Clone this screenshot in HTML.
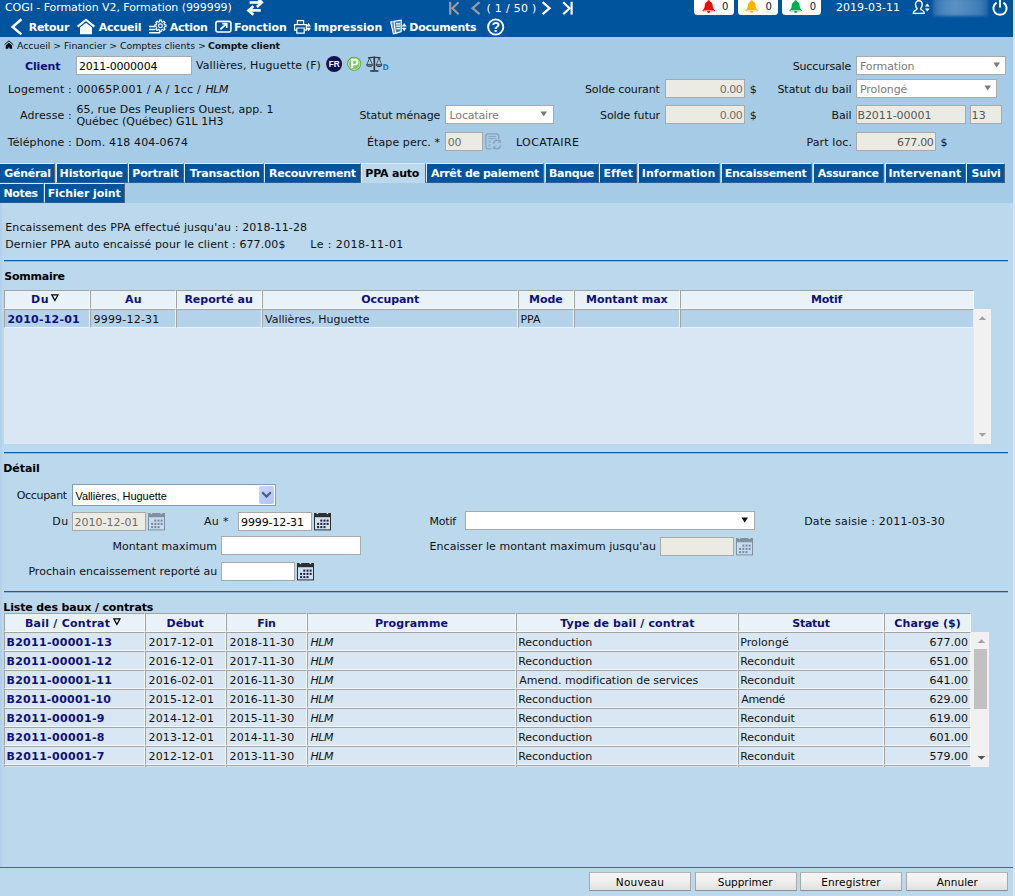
<!DOCTYPE html><html lang="fr"><head><meta charset="utf-8"><title>COGI - Compte client</title><style>
html,body{margin:0;padding:0}body{width:1015px;height:896px;position:relative;overflow:hidden;background:#bcd8ed;font-family:'DejaVu Sans','Liberation Sans',sans-serif;font-size:11px}
.a{position:absolute;box-sizing:border-box}.t{position:absolute;white-space:nowrap;line-height:16px;height:16px}
</style></head><body>
<div class="a" style="left:0px;top:0px;width:1013px;height:37px;background:#00539d;"></div>
<div class="a" style="left:0px;top:37px;width:1013px;height:166px;background:#a6cbe6;"></div>
<div class="a" style="left:0px;top:203px;width:1013px;height:693px;background:#bcd8ed;"></div>
<div class="a" style="left:1013px;top:0px;width:2px;height:896px;background:#d6e6f4;"></div>
<div class="a" style="left:0px;top:203px;width:2px;height:664px;background:#b3d1ea;"></div>
<svg class="a" style="left:244px;top:0px;" width="22" height="16" viewBox="0 0 22 16"><g fill="none" stroke="#fff" stroke-width="2.6" stroke-linejoin="miter"><path d="M5.6 2.5H17"/><path d="M13.4 -2L17.8 2.5L12.9 7"/><path d="M16.8 10.4H5"/><path d="M9.4 6.2L4.4 10.4L9.4 14.8"/></g></svg>
<svg class="a" style="left:446px;top:0px;" width="130" height="16" viewBox="0 0 130 16"><g fill="none" stroke-width="2.2"><g stroke="#9b9b9b"><path d="M4.2 1.8V14.6"/><path d="M12.6 2.2L6.4 8.2L12.6 14.2"/><path d="M33.6 2.2L26.6 8.2L33.6 14.2"/></g><g stroke="#fff"><path d="M96.6 2.2L103.6 8.2L96.6 14.2"/><path d="M117.2 2.2L123.6 8.2L117.2 14.2"/><path d="M125.6 1.8V14.6"/></g></g></svg>
<div class="a" style="left:694px;top:-3px;width:40px;height:18px;background:#fff;border-radius:3.5px;"></div>
<svg class="a" style="left:701.6px;top:0px;" width="14" height="14" viewBox="0 0 14 14"><path d="M6.7 0.2C5.9 0.2 5.4 0.8 5.4 1.5C3.6 2.1 2.9 3.8 2.8 5.6C2.7 7.6 2 9.2 0.3 10.6C0.2 11 0.4 11.3 0.9 11.3H5.2C5.2 12.2 5.8 12.9 6.7 12.9C7.6 12.9 8.2 12.2 8.2 11.3H12.5C13 11.3 13.2 11 13.1 10.6C11.4 9.2 10.7 7.6 10.6 5.6C10.5 3.8 9.8 2.1 8 1.5C8 0.8 7.5 0.2 6.7 0.2Z" fill="#ff0000"/><path d="M1.6 10.5H11.8" stroke="#fff" stroke-width="0.7" opacity=".8"/></svg>
<div class="a" style="left:738px;top:-3px;width:40px;height:18px;background:#fff;border-radius:3.5px;"></div>
<svg class="a" style="left:745.3px;top:0px;" width="14" height="14" viewBox="0 0 14 14"><path d="M6.7 0.2C5.9 0.2 5.4 0.8 5.4 1.5C3.6 2.1 2.9 3.8 2.8 5.6C2.7 7.6 2 9.2 0.3 10.6C0.2 11 0.4 11.3 0.9 11.3H5.2C5.2 12.2 5.8 12.9 6.7 12.9C7.6 12.9 8.2 12.2 8.2 11.3H12.5C13 11.3 13.2 11 13.1 10.6C11.4 9.2 10.7 7.6 10.6 5.6C10.5 3.8 9.8 2.1 8 1.5C8 0.8 7.5 0.2 6.7 0.2Z" fill="#ffb400"/><path d="M1.6 10.5H11.8" stroke="#fff" stroke-width="0.7" opacity=".8"/></svg>
<div class="a" style="left:782px;top:-3px;width:39px;height:18px;background:#fff;border-radius:3.5px;"></div>
<svg class="a" style="left:789.4px;top:0px;" width="14" height="14" viewBox="0 0 14 14"><path d="M6.7 0.2C5.9 0.2 5.4 0.8 5.4 1.5C3.6 2.1 2.9 3.8 2.8 5.6C2.7 7.6 2 9.2 0.3 10.6C0.2 11 0.4 11.3 0.9 11.3H5.2C5.2 12.2 5.8 12.9 6.7 12.9C7.6 12.9 8.2 12.2 8.2 11.3H12.5C13 11.3 13.2 11 13.1 10.6C11.4 9.2 10.7 7.6 10.6 5.6C10.5 3.8 9.8 2.1 8 1.5C8 0.8 7.5 0.2 6.7 0.2Z" fill="#00b050"/><path d="M1.6 10.5H11.8" stroke="#fff" stroke-width="0.7" opacity=".8"/></svg>
<svg class="a" style="left:912px;top:0px;" width="19" height="15" viewBox="0 0 19 15"><g fill="none" stroke="#fff" stroke-width="1.4"><path d="M6.8 0.8C9 0.8 10.2 2.4 10.2 4.6C10.2 6.3 9.5 7.6 8.6 8.4C8.6 9.4 9 9.8 10.4 10.3C11.8 10.8 12.4 11.6 12.4 13.4H1.3C1.3 11.6 1.9 10.8 3.3 10.3C4.7 9.8 5.1 9.4 5.1 8.4C4.2 7.6 3.5 6.3 3.5 4.6C3.5 2.4 4.6 0.8 6.8 0.8Z"/></g><path d="M12.9 6.6L15.3 3.6L17.7 6.6Z M12.9 8.4L15.3 11.4L17.7 8.4Z" fill="#fff"/></svg>
<div class="a" style="left:933px;top:-2px;width:55px;height:18px;background:linear-gradient(90deg,#2a6cab 0%,#4a85bc 18%,#5b91c3 40%,#4f88be 60%,#3f7db7 85%,#1f64a6 100%);filter:blur(1.6px);"></div>
<svg class="a" style="left:991px;top:0px;" width="18" height="16" viewBox="0 0 18 16"><g fill="none" stroke="#fff" stroke-width="2" stroke-linecap="butt"><path d="M5.6 2.6A6.6 6.6 0 1 0 12.4 2.6"/><path d="M9 -1V7.4"/></g></svg>
<svg class="a" style="left:9px;top:17px;" width="16" height="20" viewBox="0 0 16 20"><path d="M12.4 2.2L3.6 10L12.4 17.4" fill="none" stroke="#fff" stroke-width="2.5"/></svg>
<svg class="a" style="left:76px;top:17px;" width="20" height="19" viewBox="0 0 20 19"><path d="M1.6 9.6L10 2.8L18.4 9.6" fill="none" stroke="#fff" stroke-width="2"/><path d="M4 10.6L10 5.8L16 10.6V17.2H4Z" fill="#fff"/></svg>
<svg class="a" style="left:148px;top:18px;" width="19" height="17" viewBox="0 0 19 17"><g stroke="#fff" fill="none"><path d="M1 8.6H6.4 M1 11.6H7.2 M1 14.8H12.4" stroke-width="1.5"/><path d="M18.02 6.82L18.02 8.78L16.48 8.78L15.98 9.99L17.06 11.08L15.68 12.46L14.59 11.38L13.38 11.88L13.38 13.42L11.42 13.42L11.42 11.88L10.21 11.38L9.12 12.46L7.74 11.08L8.82 9.99L8.32 8.78L6.78 8.78L6.78 6.82L8.32 6.82L8.82 5.61L7.74 4.52L9.12 3.14L10.21 4.22L11.42 3.72L11.42 2.18L13.38 2.18L13.38 3.72L14.59 4.22L15.68 3.14L17.06 4.52L15.98 5.61L16.48 6.82Z" stroke-width="1.15" stroke-linejoin="round"/><circle cx="12.4" cy="7.8" r="1.9" stroke-width="1.15"/></g></svg>
<svg class="a" style="left:214px;top:19px;" width="19" height="15" viewBox="0 0 19 15"><g fill="none" stroke="#fff"><rect x="1.9" y="2.4" width="15" height="10.6" rx="2" stroke-width="1.6"/><path d="M6.4 10.4L12.6 4.6" stroke-width="1.8"/><path d="M8.4 4.6H12.8V9" stroke-width="1.6"/></g></svg>
<svg class="a" style="left:293px;top:19px;" width="19" height="16" viewBox="0 0 19 16"><g fill="none" stroke="#fff" stroke-width="1.2"><path d="M4.4 5.4V1.6H10.6V5.4"/><path d="M3.8 11.2H1.6V5.6H13.4V11.2H11.2"/><path d="M3.8 9H11.2V14.2H3.8Z"/></g><path d="M13.2 7.4L15.6 4L18 7.4Z M13.2 8.8L15.6 12.2L18 8.8Z" fill="#fff"/></svg>
<svg class="a" style="left:389px;top:19px;" width="19" height="16" viewBox="0 0 19 16"><g fill="none" stroke="#fff" stroke-width="1.2"><path d="M4.8 2.4L12.2 1.2V12.6L6.6 14.4Z" fill="#fff" fill-opacity=".25"/><path d="M3.4 2.6L1.8 3.2L4.4 14.8L6.2 14.4" /><path d="M4 2.4L2.8 2.8L5.4 14.6" stroke-width=".8" opacity=".7"/><path d="M7 4.8H11 M7.2 7.2H11 M7.4 9.6H11" stroke-width="1.3"/></g><path d="M12.8 7.4L15.2 4L17.6 7.4Z M12.8 8.8L15.2 12.2L17.6 8.8Z" fill="#fff"/></svg>
<svg class="a" style="left:486px;top:18px;" width="20" height="19" viewBox="0 0 20 19"><circle cx="9.7" cy="9" r="7.6" fill="none" stroke="#fff" stroke-width="1.9"/></svg>
<svg class="a" style="left:3.6px;top:40.4px;" width="10" height="9" viewBox="0 0 10 9"><path d="M0.5 4.7L4.9 0.9L9.3 4.7" fill="none" stroke="#111" stroke-width="1"/><path d="M1.7 5.4L4.9 2.7L8.1 5.4V8.7H5.6V7.9C5.6 7.1 4.2 7.1 4.2 7.9V8.7H1.7Z" fill="#000"/></svg>
<div class="a" style="left:76px;top:56px;width:116px;height:19px;background:#fff;border:1px solid #a9a9a9;"></div>
<svg class="a" style="left:325px;top:55px;" width="18" height="18" viewBox="0 0 18 18"><circle cx="9.1" cy="9" r="8" fill="#11114f"/><text x="9.1" y="11.9" text-anchor="middle" font-family="'Liberation Sans',sans-serif" font-weight="bold" font-size="8.2" fill="#fff" letter-spacing="-0.2">FR</text></svg>
<svg class="a" style="left:346px;top:56px;" width="16" height="16" viewBox="0 0 16 16"><circle cx="8.2" cy="7.8" r="7" fill="#4aa83a"/><circle cx="8.2" cy="7.8" r="5.7" fill="#7fc763" stroke="#cdeabf" stroke-width="0.9"/><text x="8.5" y="12.2" text-anchor="middle" font-family="'Liberation Sans',sans-serif" font-weight="bold" font-size="12" fill="#fff">P</text></svg>
<svg class="a" style="left:365px;top:55px;" width="18" height="18" viewBox="0 0 18 18"><g fill="none" stroke="#2b3642"><path d="M9.3 1.6V15.4" stroke-width="1.7"/><path d="M5.2 16H13.4" stroke-width="1.6"/><path d="M3 2.9C5 2.2 7.4 2.4 9.3 2.4C11.2 2.4 13.6 2.2 15.6 2.9" stroke-width="1.2"/><path d="M4.6 3L1.9 9.6 M4.6 3L7.3 9.6 M14 3L11.3 9.6 M14 3L16.7 9.6" stroke-width="0.8"/><path d="M1.6 9.8C2 12.2 7.2 12.2 7.6 9.8Z M11 9.8C11.4 12.2 16.6 12.2 17 9.8Z" stroke-width="1" fill="#2b3642" fill-opacity=".35"/></g></svg>
<div class="a" style="left:445px;top:105px;width:109px;height:19px;background:#fff;border:1px solid #a9a9a9;"></div>
<svg class="a" style="left:540.4px;top:110.8px;" width="8" height="6" viewBox="0 0 8 6"><path d="M0.4 0.4H7L3.7 5.6Z" fill="#7a7a7a"/></svg>
<div class="a" style="left:445px;top:132px;width:38px;height:19px;background:#ebebe4;border:1px solid #a9a9a9;"></div>
<svg class="a" style="left:484px;top:132px;" width="19" height="19" viewBox="0 0 19 19"><g fill="none" stroke="#8aa3bd" stroke-width="1.3"><path d="M7.4 16.8H4.2C2.6 16.8 1.8 16 1.8 14.4V4.2C1.8 2.6 2.6 1.8 4.2 1.8H12.4C14 1.8 14.8 2.6 14.8 4.2V7.6"/><path d="M4.4 4.4H12.2 M4.4 6.6H12.2" stroke-width="1"/><path d="M4.6 9.6H6.4 M4.6 13.4H6.4" stroke-width="1.8"/><path d="M9.4 11.8A3.8 3.8 0 0 1 16 9.6 M16.6 13.2A3.8 3.8 0 0 1 10 15.4" stroke-width="1.5"/></g><path d="M16.9 7.4V10.8H13.5Z M9.1 17.6V14.2H12.5Z" fill="#8aa3bd"/></svg>
<div class="a" style="left:665px;top:79px;width:80px;height:19px;background:#ebebe4;border:1px solid #a9a9a9;"></div>
<div class="a" style="left:665px;top:105px;width:80px;height:19px;background:#ebebe4;border:1px solid #a9a9a9;"></div>
<div class="a" style="left:856px;top:56px;width:150px;height:19px;background:#fff;border:1px solid #a9a9a9;"></div>
<svg class="a" style="left:992.6px;top:62px;" width="8" height="6" viewBox="0 0 8 6"><path d="M0.4 0.4H7L3.7 5.6Z" fill="#7a7a7a"/></svg>
<div class="a" style="left:856px;top:79px;width:141px;height:19px;background:#fff;border:1px solid #a9a9a9;"></div>
<svg class="a" style="left:983.6px;top:85px;" width="8" height="6" viewBox="0 0 8 6"><path d="M0.4 0.4H7L3.7 5.6Z" fill="#7a7a7a"/></svg>
<div class="a" style="left:856px;top:105px;width:110px;height:19px;background:#ebebe4;border:1px solid #a9a9a9;"></div>
<div class="a" style="left:970px;top:105px;width:32px;height:19px;background:#ebebe4;border:1px solid #a9a9a9;"></div>
<div class="a" style="left:856px;top:132px;width:80px;height:19px;background:#ebebe4;border:1px solid #a9a9a9;"></div>
<div class="a" style="left:-1px;top:163px;width:56px;height:20px;background:#00539d;border-top:1px solid #dce9f5;border-left:1px solid #dce9f5;border-right:1px solid #5a6470;border-bottom:1px solid #2a5f96;"></div>
<div class="a" style="left:56px;top:163px;width:72px;height:20px;background:#00539d;border-top:1px solid #dce9f5;border-left:1px solid #dce9f5;border-right:1px solid #5a6470;border-bottom:1px solid #2a5f96;"></div>
<div class="a" style="left:128px;top:163px;width:56px;height:20px;background:#00539d;border-top:1px solid #dce9f5;border-left:1px solid #dce9f5;border-right:1px solid #5a6470;border-bottom:1px solid #2a5f96;"></div>
<div class="a" style="left:184px;top:163px;width:80px;height:20px;background:#00539d;border-top:1px solid #dce9f5;border-left:1px solid #dce9f5;border-right:1px solid #5a6470;border-bottom:1px solid #2a5f96;"></div>
<div class="a" style="left:264px;top:163px;width:97px;height:20px;background:#00539d;border-top:1px solid #dce9f5;border-left:1px solid #dce9f5;border-right:1px solid #5a6470;border-bottom:1px solid #2a5f96;"></div>
<div class="a" style="left:361px;top:163px;width:65px;height:20px;background:#bcd8ed;border-top:1px solid #dce9f5;border-left:1px solid #dce9f5;border-right:1px solid #5a6470;"></div>
<div class="a" style="left:426px;top:163px;width:118px;height:20px;background:#00539d;border-top:1px solid #dce9f5;border-left:1px solid #dce9f5;border-right:1px solid #5a6470;border-bottom:1px solid #2a5f96;"></div>
<div class="a" style="left:545px;top:163px;width:54px;height:20px;background:#00539d;border-top:1px solid #dce9f5;border-left:1px solid #dce9f5;border-right:1px solid #5a6470;border-bottom:1px solid #2a5f96;"></div>
<div class="a" style="left:599px;top:163px;width:38px;height:20px;background:#00539d;border-top:1px solid #dce9f5;border-left:1px solid #dce9f5;border-right:1px solid #5a6470;border-bottom:1px solid #2a5f96;"></div>
<div class="a" style="left:638px;top:163px;width:82px;height:20px;background:#00539d;border-top:1px solid #dce9f5;border-left:1px solid #dce9f5;border-right:1px solid #5a6470;border-bottom:1px solid #2a5f96;"></div>
<div class="a" style="left:721px;top:163px;width:91px;height:20px;background:#00539d;border-top:1px solid #dce9f5;border-left:1px solid #dce9f5;border-right:1px solid #5a6470;border-bottom:1px solid #2a5f96;"></div>
<div class="a" style="left:813px;top:163px;width:71px;height:20px;background:#00539d;border-top:1px solid #dce9f5;border-left:1px solid #dce9f5;border-right:1px solid #5a6470;border-bottom:1px solid #2a5f96;"></div>
<div class="a" style="left:885px;top:163px;width:81px;height:20px;background:#00539d;border-top:1px solid #dce9f5;border-left:1px solid #dce9f5;border-right:1px solid #5a6470;border-bottom:1px solid #2a5f96;"></div>
<div class="a" style="left:966px;top:163px;width:39px;height:20px;background:#00539d;border-top:1px solid #dce9f5;border-left:1px solid #dce9f5;border-right:1px solid #5a6470;border-bottom:1px solid #2a5f96;"></div>
<div class="a" style="left:-1px;top:183px;width:45px;height:20px;background:#00539d;border-top:1px solid #dce9f5;border-left:1px solid #dce9f5;border-right:1px solid #5a6470;border-bottom:1px solid #2a5f96;"></div>
<div class="a" style="left:44px;top:183px;width:81px;height:20px;background:#00539d;border-top:1px solid #dce9f5;border-left:1px solid #dce9f5;border-right:1px solid #5a6470;border-bottom:1px solid #2a5f96;"></div>
<div class="a" style="left:4px;top:260px;width:1004px;height:1px;background:#0f5fa8;"></div>
<div class="a" style="left:4px;top:261px;width:1004px;height:1px;background:rgba(15,95,168,.28);"></div>
<div class="a" style="left:4px;top:309px;width:970px;height:135px;background:#d9e7f4;"></div>
<div class="a" style="left:4px;top:290px;width:86px;height:19px;background:#e9f1f9;border-top:1px solid #a3a3a3;border-left:1px solid #a3a3a3;border-bottom:1px solid #f6fafd;border-right:1px solid #f6fafd;"></div>
<div class="a" style="left:4px;top:309px;width:86px;height:19px;background:#b5d2eb;border-top:1px solid #a3a3a3;border-left:1px solid #a3a3a3;border-bottom:1px solid #eaf2f9;border-right:1px solid #eaf2f9;"></div>
<div class="a" style="left:90px;top:290px;width:86px;height:19px;background:#e9f1f9;border-top:1px solid #a3a3a3;border-left:1px solid #a3a3a3;border-bottom:1px solid #f6fafd;border-right:1px solid #f6fafd;"></div>
<div class="a" style="left:90px;top:309px;width:86px;height:19px;background:#b5d2eb;border-top:1px solid #a3a3a3;border-left:1px solid #a3a3a3;border-bottom:1px solid #eaf2f9;border-right:1px solid #eaf2f9;"></div>
<div class="a" style="left:176px;top:290px;width:86px;height:19px;background:#e9f1f9;border-top:1px solid #a3a3a3;border-left:1px solid #a3a3a3;border-bottom:1px solid #f6fafd;border-right:1px solid #f6fafd;"></div>
<div class="a" style="left:176px;top:309px;width:86px;height:19px;background:#b5d2eb;border-top:1px solid #a3a3a3;border-left:1px solid #a3a3a3;border-bottom:1px solid #eaf2f9;border-right:1px solid #eaf2f9;"></div>
<div class="a" style="left:262px;top:290px;width:256px;height:19px;background:#e9f1f9;border-top:1px solid #a3a3a3;border-left:1px solid #a3a3a3;border-bottom:1px solid #f6fafd;border-right:1px solid #f6fafd;"></div>
<div class="a" style="left:262px;top:309px;width:256px;height:19px;background:#b5d2eb;border-top:1px solid #a3a3a3;border-left:1px solid #a3a3a3;border-bottom:1px solid #eaf2f9;border-right:1px solid #eaf2f9;"></div>
<div class="a" style="left:518px;top:290px;width:56px;height:19px;background:#e9f1f9;border-top:1px solid #a3a3a3;border-left:1px solid #a3a3a3;border-bottom:1px solid #f6fafd;border-right:1px solid #f6fafd;"></div>
<div class="a" style="left:518px;top:309px;width:56px;height:19px;background:#b5d2eb;border-top:1px solid #a3a3a3;border-left:1px solid #a3a3a3;border-bottom:1px solid #eaf2f9;border-right:1px solid #eaf2f9;"></div>
<div class="a" style="left:574px;top:290px;width:106px;height:19px;background:#e9f1f9;border-top:1px solid #a3a3a3;border-left:1px solid #a3a3a3;border-bottom:1px solid #f6fafd;border-right:1px solid #f6fafd;"></div>
<div class="a" style="left:574px;top:309px;width:106px;height:19px;background:#b5d2eb;border-top:1px solid #a3a3a3;border-left:1px solid #a3a3a3;border-bottom:1px solid #eaf2f9;border-right:1px solid #eaf2f9;"></div>
<div class="a" style="left:680px;top:290px;width:294px;height:19px;background:#e9f1f9;border-top:1px solid #a3a3a3;border-left:1px solid #a3a3a3;border-bottom:1px solid #f6fafd;border-right:1px solid #f6fafd;"></div>
<div class="a" style="left:680px;top:309px;width:294px;height:19px;background:#b5d2eb;border-top:1px solid #a3a3a3;border-left:1px solid #a3a3a3;border-bottom:1px solid #eaf2f9;border-right:1px solid #eaf2f9;"></div>
<svg class="a" style="left:51px;top:294.4px;" width="8" height="8" viewBox="0 0 8 8"><path d="M0.8 0.9H7L3.9 6.6Z" fill="none" stroke="#000" stroke-width="1.2"/></svg>
<div class="a" style="left:974px;top:308.5px;width:17px;height:135.5px;background:#f1f1f1;"></div>
<svg class="a" style="left:978px;top:315px;" width="9" height="6" viewBox="0 0 9 6"><path d="M0.6 5L4.4 1.2L8.2 5Z" fill="#a3a3a3"/></svg>
<svg class="a" style="left:978px;top:432px;" width="9" height="6" viewBox="0 0 9 6"><path d="M0.6 1L4.4 4.8L8.2 1Z" fill="#a3a3a3"/></svg>
<div class="a" style="left:4px;top:452px;width:1004px;height:1px;background:#0f5fa8;"></div>
<div class="a" style="left:4px;top:453px;width:1004px;height:1px;background:rgba(15,95,168,.28);"></div>
<div class="a" style="left:72px;top:484px;width:204px;height:22px;background:#fff;border:1px solid #7f9db9;"></div>
<div class="a" style="left:259px;top:486px;width:15px;height:18px;border-radius:2px;background:linear-gradient(135deg,#c9d6f8 0%,#bccdf6 50%,#b1c6f5 100%);"></div>
<svg class="a" style="left:259px;top:486px;" width="15" height="18" viewBox="0 0 15 18"><path d="M3.2 6.2L7.5 10.6L11.8 6.2" fill="none" stroke="#4d6185" stroke-width="2.2"/></svg>
<div class="a" style="left:72px;top:512px;width:74px;height:19px;background:#ebebe4;border:1px solid #a9a9a9;"></div>
<svg class="a" style="left:148px;top:513px;opacity:.42;" width="17" height="18" viewBox="0 0 17 18"><rect x="0.5" y="0.5" width="16" height="16.4" fill="#cfe2f3" stroke="#2e2e2e" stroke-width="1"/><rect x="0" y="0" width="17" height="4.2" fill="#2e2e2e"/><rect x="2.6" y="0" width="1.6" height="1.1" fill="#cfe2f3"/><rect x="12.6" y="0" width="1.6" height="1.1" fill="#cfe2f3"/><rect x="6.3" y="6.6" width="2" height="2" fill="#241a3a"/><rect x="9.5" y="6.6" width="2" height="2" fill="#241a3a"/><rect x="12.6" y="6.6" width="2" height="2" fill="#241a3a"/><rect x="3.1" y="9.9" width="2" height="2" fill="#241a3a"/><rect x="6.3" y="9.9" width="2" height="2" fill="#241a3a"/><rect x="9.5" y="9.9" width="2" height="2" fill="#241a3a"/><rect x="12.6" y="9.9" width="2" height="2" fill="#241a3a"/><rect x="3.1" y="13.1" width="2" height="2" fill="#241a3a"/><rect x="6.3" y="13.1" width="2" height="2" fill="#241a3a"/><rect x="9.5" y="13.1" width="2" height="2" fill="#241a3a"/></svg>
<div class="a" style="left:238px;top:512px;width:74px;height:19px;background:#fff;border:1px solid #a9a9a9;"></div>
<svg class="a" style="left:314px;top:513px;" width="17" height="18" viewBox="0 0 17 18"><rect x="0.5" y="0.5" width="16" height="16.4" fill="#cfe2f3" stroke="#2e2e2e" stroke-width="1"/><rect x="0" y="0" width="17" height="4.2" fill="#2e2e2e"/><rect x="2.6" y="0" width="1.6" height="1.1" fill="#cfe2f3"/><rect x="12.6" y="0" width="1.6" height="1.1" fill="#cfe2f3"/><rect x="6.3" y="6.6" width="2" height="2" fill="#241a3a"/><rect x="9.5" y="6.6" width="2" height="2" fill="#241a3a"/><rect x="12.6" y="6.6" width="2" height="2" fill="#241a3a"/><rect x="3.1" y="9.9" width="2" height="2" fill="#241a3a"/><rect x="6.3" y="9.9" width="2" height="2" fill="#241a3a"/><rect x="9.5" y="9.9" width="2" height="2" fill="#241a3a"/><rect x="12.6" y="9.9" width="2" height="2" fill="#241a3a"/><rect x="3.1" y="13.1" width="2" height="2" fill="#241a3a"/><rect x="6.3" y="13.1" width="2" height="2" fill="#241a3a"/><rect x="9.5" y="13.1" width="2" height="2" fill="#241a3a"/></svg>
<div class="a" style="left:465px;top:511px;width:290px;height:19px;background:#fff;border:1px solid #a9a9a9;"></div>
<svg class="a" style="left:741px;top:516.8px;" width="8" height="6" viewBox="0 0 8 6"><path d="M0.4 0.4H7L3.7 5.6Z" fill="#111"/></svg>
<div class="a" style="left:221px;top:536px;width:140px;height:19px;background:#fff;border:1px solid #a9a9a9;"></div>
<div class="a" style="left:660px;top:537px;width:74px;height:19px;background:#ebebe4;border:1px solid #a9a9a9;"></div>
<svg class="a" style="left:736px;top:538px;opacity:.42;" width="17" height="18" viewBox="0 0 17 18"><rect x="0.5" y="0.5" width="16" height="16.4" fill="#cfe2f3" stroke="#2e2e2e" stroke-width="1"/><rect x="0" y="0" width="17" height="4.2" fill="#2e2e2e"/><rect x="2.6" y="0" width="1.6" height="1.1" fill="#cfe2f3"/><rect x="12.6" y="0" width="1.6" height="1.1" fill="#cfe2f3"/><rect x="6.3" y="6.6" width="2" height="2" fill="#241a3a"/><rect x="9.5" y="6.6" width="2" height="2" fill="#241a3a"/><rect x="12.6" y="6.6" width="2" height="2" fill="#241a3a"/><rect x="3.1" y="9.9" width="2" height="2" fill="#241a3a"/><rect x="6.3" y="9.9" width="2" height="2" fill="#241a3a"/><rect x="9.5" y="9.9" width="2" height="2" fill="#241a3a"/><rect x="12.6" y="9.9" width="2" height="2" fill="#241a3a"/><rect x="3.1" y="13.1" width="2" height="2" fill="#241a3a"/><rect x="6.3" y="13.1" width="2" height="2" fill="#241a3a"/><rect x="9.5" y="13.1" width="2" height="2" fill="#241a3a"/></svg>
<div class="a" style="left:221px;top:562px;width:74px;height:19px;background:#fff;border:1px solid #a9a9a9;"></div>
<svg class="a" style="left:297px;top:563px;" width="17" height="18" viewBox="0 0 17 18"><rect x="0.5" y="0.5" width="16" height="16.4" fill="#cfe2f3" stroke="#2e2e2e" stroke-width="1"/><rect x="0" y="0" width="17" height="4.2" fill="#2e2e2e"/><rect x="2.6" y="0" width="1.6" height="1.1" fill="#cfe2f3"/><rect x="12.6" y="0" width="1.6" height="1.1" fill="#cfe2f3"/><rect x="6.3" y="6.6" width="2" height="2" fill="#241a3a"/><rect x="9.5" y="6.6" width="2" height="2" fill="#241a3a"/><rect x="12.6" y="6.6" width="2" height="2" fill="#241a3a"/><rect x="3.1" y="9.9" width="2" height="2" fill="#241a3a"/><rect x="6.3" y="9.9" width="2" height="2" fill="#241a3a"/><rect x="9.5" y="9.9" width="2" height="2" fill="#241a3a"/><rect x="12.6" y="9.9" width="2" height="2" fill="#241a3a"/><rect x="3.1" y="13.1" width="2" height="2" fill="#241a3a"/><rect x="6.3" y="13.1" width="2" height="2" fill="#241a3a"/><rect x="9.5" y="13.1" width="2" height="2" fill="#241a3a"/></svg>
<div class="a" style="left:4px;top:591px;width:1004px;height:1px;background:#0f5fa8;"></div>
<div class="a" style="left:4px;top:592px;width:1004px;height:1px;background:rgba(15,95,168,.28);"></div>
<div class="a" style="left:4px;top:613px;width:967px;height:154px;background:#d9e7f4;"></div>
<div class="a" style="left:4px;top:613px;width:141px;height:19px;background:#e9f1f9;border-top:1px solid #a3a3a3;border-left:1px solid #a3a3a3;border-bottom:1px solid #f6fafd;border-right:1px solid #f6fafd;"></div>
<div class="a" style="left:4px;top:632px;width:141px;height:19px;background:#d9e7f4;border-top:1px solid #a3a3a3;border-left:1px solid #a3a3a3;border-bottom:1px solid #f3f8fc;border-right:1px solid #f3f8fc;"></div>
<div class="a" style="left:4px;top:651px;width:141px;height:19px;background:#d9e7f4;border-top:1px solid #a3a3a3;border-left:1px solid #a3a3a3;border-bottom:1px solid #f3f8fc;border-right:1px solid #f3f8fc;"></div>
<div class="a" style="left:4px;top:670px;width:141px;height:19px;background:#d9e7f4;border-top:1px solid #a3a3a3;border-left:1px solid #a3a3a3;border-bottom:1px solid #f3f8fc;border-right:1px solid #f3f8fc;"></div>
<div class="a" style="left:4px;top:689px;width:141px;height:19px;background:#d9e7f4;border-top:1px solid #a3a3a3;border-left:1px solid #a3a3a3;border-bottom:1px solid #f3f8fc;border-right:1px solid #f3f8fc;"></div>
<div class="a" style="left:4px;top:708px;width:141px;height:19px;background:#d9e7f4;border-top:1px solid #a3a3a3;border-left:1px solid #a3a3a3;border-bottom:1px solid #f3f8fc;border-right:1px solid #f3f8fc;"></div>
<div class="a" style="left:4px;top:727px;width:141px;height:19px;background:#d9e7f4;border-top:1px solid #a3a3a3;border-left:1px solid #a3a3a3;border-bottom:1px solid #f3f8fc;border-right:1px solid #f3f8fc;"></div>
<div class="a" style="left:4px;top:746px;width:141px;height:19px;background:#d9e7f4;border-top:1px solid #a3a3a3;border-left:1px solid #a3a3a3;border-bottom:1px solid #f3f8fc;border-right:1px solid #f3f8fc;"></div>
<div class="a" style="left:4px;top:765px;width:141px;height:2px;background:#d9e7f4;border-top:1px solid #a3a3a3;border-left:1px solid #a3a3a3;border-right:1px solid #f3f8fc;"></div>
<div class="a" style="left:145px;top:613px;width:81px;height:19px;background:#e9f1f9;border-top:1px solid #a3a3a3;border-left:1px solid #a3a3a3;border-bottom:1px solid #f6fafd;border-right:1px solid #f6fafd;"></div>
<div class="a" style="left:145px;top:632px;width:81px;height:19px;background:#d9e7f4;border-top:1px solid #a3a3a3;border-left:1px solid #a3a3a3;border-bottom:1px solid #f3f8fc;border-right:1px solid #f3f8fc;"></div>
<div class="a" style="left:145px;top:651px;width:81px;height:19px;background:#d9e7f4;border-top:1px solid #a3a3a3;border-left:1px solid #a3a3a3;border-bottom:1px solid #f3f8fc;border-right:1px solid #f3f8fc;"></div>
<div class="a" style="left:145px;top:670px;width:81px;height:19px;background:#d9e7f4;border-top:1px solid #a3a3a3;border-left:1px solid #a3a3a3;border-bottom:1px solid #f3f8fc;border-right:1px solid #f3f8fc;"></div>
<div class="a" style="left:145px;top:689px;width:81px;height:19px;background:#d9e7f4;border-top:1px solid #a3a3a3;border-left:1px solid #a3a3a3;border-bottom:1px solid #f3f8fc;border-right:1px solid #f3f8fc;"></div>
<div class="a" style="left:145px;top:708px;width:81px;height:19px;background:#d9e7f4;border-top:1px solid #a3a3a3;border-left:1px solid #a3a3a3;border-bottom:1px solid #f3f8fc;border-right:1px solid #f3f8fc;"></div>
<div class="a" style="left:145px;top:727px;width:81px;height:19px;background:#d9e7f4;border-top:1px solid #a3a3a3;border-left:1px solid #a3a3a3;border-bottom:1px solid #f3f8fc;border-right:1px solid #f3f8fc;"></div>
<div class="a" style="left:145px;top:746px;width:81px;height:19px;background:#d9e7f4;border-top:1px solid #a3a3a3;border-left:1px solid #a3a3a3;border-bottom:1px solid #f3f8fc;border-right:1px solid #f3f8fc;"></div>
<div class="a" style="left:145px;top:765px;width:81px;height:2px;background:#d9e7f4;border-top:1px solid #a3a3a3;border-left:1px solid #a3a3a3;border-right:1px solid #f3f8fc;"></div>
<div class="a" style="left:226px;top:613px;width:81px;height:19px;background:#e9f1f9;border-top:1px solid #a3a3a3;border-left:1px solid #a3a3a3;border-bottom:1px solid #f6fafd;border-right:1px solid #f6fafd;"></div>
<div class="a" style="left:226px;top:632px;width:81px;height:19px;background:#d9e7f4;border-top:1px solid #a3a3a3;border-left:1px solid #a3a3a3;border-bottom:1px solid #f3f8fc;border-right:1px solid #f3f8fc;"></div>
<div class="a" style="left:226px;top:651px;width:81px;height:19px;background:#d9e7f4;border-top:1px solid #a3a3a3;border-left:1px solid #a3a3a3;border-bottom:1px solid #f3f8fc;border-right:1px solid #f3f8fc;"></div>
<div class="a" style="left:226px;top:670px;width:81px;height:19px;background:#d9e7f4;border-top:1px solid #a3a3a3;border-left:1px solid #a3a3a3;border-bottom:1px solid #f3f8fc;border-right:1px solid #f3f8fc;"></div>
<div class="a" style="left:226px;top:689px;width:81px;height:19px;background:#d9e7f4;border-top:1px solid #a3a3a3;border-left:1px solid #a3a3a3;border-bottom:1px solid #f3f8fc;border-right:1px solid #f3f8fc;"></div>
<div class="a" style="left:226px;top:708px;width:81px;height:19px;background:#d9e7f4;border-top:1px solid #a3a3a3;border-left:1px solid #a3a3a3;border-bottom:1px solid #f3f8fc;border-right:1px solid #f3f8fc;"></div>
<div class="a" style="left:226px;top:727px;width:81px;height:19px;background:#d9e7f4;border-top:1px solid #a3a3a3;border-left:1px solid #a3a3a3;border-bottom:1px solid #f3f8fc;border-right:1px solid #f3f8fc;"></div>
<div class="a" style="left:226px;top:746px;width:81px;height:19px;background:#d9e7f4;border-top:1px solid #a3a3a3;border-left:1px solid #a3a3a3;border-bottom:1px solid #f3f8fc;border-right:1px solid #f3f8fc;"></div>
<div class="a" style="left:226px;top:765px;width:81px;height:2px;background:#d9e7f4;border-top:1px solid #a3a3a3;border-left:1px solid #a3a3a3;border-right:1px solid #f3f8fc;"></div>
<div class="a" style="left:307px;top:613px;width:209px;height:19px;background:#e9f1f9;border-top:1px solid #a3a3a3;border-left:1px solid #a3a3a3;border-bottom:1px solid #f6fafd;border-right:1px solid #f6fafd;"></div>
<div class="a" style="left:307px;top:632px;width:209px;height:19px;background:#d9e7f4;border-top:1px solid #a3a3a3;border-left:1px solid #a3a3a3;border-bottom:1px solid #f3f8fc;border-right:1px solid #f3f8fc;"></div>
<div class="a" style="left:307px;top:651px;width:209px;height:19px;background:#d9e7f4;border-top:1px solid #a3a3a3;border-left:1px solid #a3a3a3;border-bottom:1px solid #f3f8fc;border-right:1px solid #f3f8fc;"></div>
<div class="a" style="left:307px;top:670px;width:209px;height:19px;background:#d9e7f4;border-top:1px solid #a3a3a3;border-left:1px solid #a3a3a3;border-bottom:1px solid #f3f8fc;border-right:1px solid #f3f8fc;"></div>
<div class="a" style="left:307px;top:689px;width:209px;height:19px;background:#d9e7f4;border-top:1px solid #a3a3a3;border-left:1px solid #a3a3a3;border-bottom:1px solid #f3f8fc;border-right:1px solid #f3f8fc;"></div>
<div class="a" style="left:307px;top:708px;width:209px;height:19px;background:#d9e7f4;border-top:1px solid #a3a3a3;border-left:1px solid #a3a3a3;border-bottom:1px solid #f3f8fc;border-right:1px solid #f3f8fc;"></div>
<div class="a" style="left:307px;top:727px;width:209px;height:19px;background:#d9e7f4;border-top:1px solid #a3a3a3;border-left:1px solid #a3a3a3;border-bottom:1px solid #f3f8fc;border-right:1px solid #f3f8fc;"></div>
<div class="a" style="left:307px;top:746px;width:209px;height:19px;background:#d9e7f4;border-top:1px solid #a3a3a3;border-left:1px solid #a3a3a3;border-bottom:1px solid #f3f8fc;border-right:1px solid #f3f8fc;"></div>
<div class="a" style="left:307px;top:765px;width:209px;height:2px;background:#d9e7f4;border-top:1px solid #a3a3a3;border-left:1px solid #a3a3a3;border-right:1px solid #f3f8fc;"></div>
<div class="a" style="left:516px;top:613px;width:222px;height:19px;background:#e9f1f9;border-top:1px solid #a3a3a3;border-left:1px solid #a3a3a3;border-bottom:1px solid #f6fafd;border-right:1px solid #f6fafd;"></div>
<div class="a" style="left:516px;top:632px;width:222px;height:19px;background:#d9e7f4;border-top:1px solid #a3a3a3;border-left:1px solid #a3a3a3;border-bottom:1px solid #f3f8fc;border-right:1px solid #f3f8fc;"></div>
<div class="a" style="left:516px;top:651px;width:222px;height:19px;background:#d9e7f4;border-top:1px solid #a3a3a3;border-left:1px solid #a3a3a3;border-bottom:1px solid #f3f8fc;border-right:1px solid #f3f8fc;"></div>
<div class="a" style="left:516px;top:670px;width:222px;height:19px;background:#d9e7f4;border-top:1px solid #a3a3a3;border-left:1px solid #a3a3a3;border-bottom:1px solid #f3f8fc;border-right:1px solid #f3f8fc;"></div>
<div class="a" style="left:516px;top:689px;width:222px;height:19px;background:#d9e7f4;border-top:1px solid #a3a3a3;border-left:1px solid #a3a3a3;border-bottom:1px solid #f3f8fc;border-right:1px solid #f3f8fc;"></div>
<div class="a" style="left:516px;top:708px;width:222px;height:19px;background:#d9e7f4;border-top:1px solid #a3a3a3;border-left:1px solid #a3a3a3;border-bottom:1px solid #f3f8fc;border-right:1px solid #f3f8fc;"></div>
<div class="a" style="left:516px;top:727px;width:222px;height:19px;background:#d9e7f4;border-top:1px solid #a3a3a3;border-left:1px solid #a3a3a3;border-bottom:1px solid #f3f8fc;border-right:1px solid #f3f8fc;"></div>
<div class="a" style="left:516px;top:746px;width:222px;height:19px;background:#d9e7f4;border-top:1px solid #a3a3a3;border-left:1px solid #a3a3a3;border-bottom:1px solid #f3f8fc;border-right:1px solid #f3f8fc;"></div>
<div class="a" style="left:516px;top:765px;width:222px;height:2px;background:#d9e7f4;border-top:1px solid #a3a3a3;border-left:1px solid #a3a3a3;border-right:1px solid #f3f8fc;"></div>
<div class="a" style="left:738px;top:613px;width:146px;height:19px;background:#e9f1f9;border-top:1px solid #a3a3a3;border-left:1px solid #a3a3a3;border-bottom:1px solid #f6fafd;border-right:1px solid #f6fafd;"></div>
<div class="a" style="left:738px;top:632px;width:146px;height:19px;background:#d9e7f4;border-top:1px solid #a3a3a3;border-left:1px solid #a3a3a3;border-bottom:1px solid #f3f8fc;border-right:1px solid #f3f8fc;"></div>
<div class="a" style="left:738px;top:651px;width:146px;height:19px;background:#d9e7f4;border-top:1px solid #a3a3a3;border-left:1px solid #a3a3a3;border-bottom:1px solid #f3f8fc;border-right:1px solid #f3f8fc;"></div>
<div class="a" style="left:738px;top:670px;width:146px;height:19px;background:#d9e7f4;border-top:1px solid #a3a3a3;border-left:1px solid #a3a3a3;border-bottom:1px solid #f3f8fc;border-right:1px solid #f3f8fc;"></div>
<div class="a" style="left:738px;top:689px;width:146px;height:19px;background:#d9e7f4;border-top:1px solid #a3a3a3;border-left:1px solid #a3a3a3;border-bottom:1px solid #f3f8fc;border-right:1px solid #f3f8fc;"></div>
<div class="a" style="left:738px;top:708px;width:146px;height:19px;background:#d9e7f4;border-top:1px solid #a3a3a3;border-left:1px solid #a3a3a3;border-bottom:1px solid #f3f8fc;border-right:1px solid #f3f8fc;"></div>
<div class="a" style="left:738px;top:727px;width:146px;height:19px;background:#d9e7f4;border-top:1px solid #a3a3a3;border-left:1px solid #a3a3a3;border-bottom:1px solid #f3f8fc;border-right:1px solid #f3f8fc;"></div>
<div class="a" style="left:738px;top:746px;width:146px;height:19px;background:#d9e7f4;border-top:1px solid #a3a3a3;border-left:1px solid #a3a3a3;border-bottom:1px solid #f3f8fc;border-right:1px solid #f3f8fc;"></div>
<div class="a" style="left:738px;top:765px;width:146px;height:2px;background:#d9e7f4;border-top:1px solid #a3a3a3;border-left:1px solid #a3a3a3;border-right:1px solid #f3f8fc;"></div>
<div class="a" style="left:884px;top:613px;width:87px;height:19px;background:#e9f1f9;border-top:1px solid #a3a3a3;border-left:1px solid #a3a3a3;border-bottom:1px solid #f6fafd;border-right:1px solid #f6fafd;"></div>
<div class="a" style="left:884px;top:632px;width:87px;height:19px;background:#d9e7f4;border-top:1px solid #a3a3a3;border-left:1px solid #a3a3a3;border-bottom:1px solid #f3f8fc;border-right:1px solid #f3f8fc;"></div>
<div class="a" style="left:884px;top:651px;width:87px;height:19px;background:#d9e7f4;border-top:1px solid #a3a3a3;border-left:1px solid #a3a3a3;border-bottom:1px solid #f3f8fc;border-right:1px solid #f3f8fc;"></div>
<div class="a" style="left:884px;top:670px;width:87px;height:19px;background:#d9e7f4;border-top:1px solid #a3a3a3;border-left:1px solid #a3a3a3;border-bottom:1px solid #f3f8fc;border-right:1px solid #f3f8fc;"></div>
<div class="a" style="left:884px;top:689px;width:87px;height:19px;background:#d9e7f4;border-top:1px solid #a3a3a3;border-left:1px solid #a3a3a3;border-bottom:1px solid #f3f8fc;border-right:1px solid #f3f8fc;"></div>
<div class="a" style="left:884px;top:708px;width:87px;height:19px;background:#d9e7f4;border-top:1px solid #a3a3a3;border-left:1px solid #a3a3a3;border-bottom:1px solid #f3f8fc;border-right:1px solid #f3f8fc;"></div>
<div class="a" style="left:884px;top:727px;width:87px;height:19px;background:#d9e7f4;border-top:1px solid #a3a3a3;border-left:1px solid #a3a3a3;border-bottom:1px solid #f3f8fc;border-right:1px solid #f3f8fc;"></div>
<div class="a" style="left:884px;top:746px;width:87px;height:19px;background:#d9e7f4;border-top:1px solid #a3a3a3;border-left:1px solid #a3a3a3;border-bottom:1px solid #f3f8fc;border-right:1px solid #f3f8fc;"></div>
<div class="a" style="left:884px;top:765px;width:87px;height:2px;background:#d9e7f4;border-top:1px solid #a3a3a3;border-left:1px solid #a3a3a3;border-right:1px solid #f3f8fc;"></div>
<svg class="a" style="left:112.6px;top:618px;" width="8" height="8" viewBox="0 0 8 8"><path d="M0.8 0.9H7L3.9 6.6Z" fill="none" stroke="#000" stroke-width="1.2"/></svg>
<div class="a" style="left:971px;top:632px;width:18px;height:135px;background:#f1f1f1;"></div>
<div class="a" style="left:974px;top:649px;width:13px;height:60px;background:#c1c1c1;"></div>
<svg class="a" style="left:977px;top:638px;" width="9" height="6" viewBox="0 0 9 6"><path d="M0.6 5L4.4 1.2L8.2 5Z" fill="#a3a3a3"/></svg>
<svg class="a" style="left:977px;top:755px;" width="9" height="6" viewBox="0 0 9 6"><path d="M0.6 1L4.4 4.8L8.2 1Z" fill="#505050"/></svg>
<div class="a" style="left:0px;top:867px;width:1013px;height:1px;background:#1e7a9c;"></div>
<div class="a" style="left:589px;top:872px;width:102px;height:19px;border:1px solid #a8a8a8;border-bottom-color:#8e8e8e;border-top-color:#b4b4b4;background:linear-gradient(#f5f5f5,#f0f0f0 45%,#e0e0e0);"></div>
<div class="a" style="left:695px;top:872px;width:102px;height:19px;border:1px solid #a8a8a8;border-bottom-color:#8e8e8e;border-top-color:#b4b4b4;background:linear-gradient(#f5f5f5,#f0f0f0 45%,#e0e0e0);"></div>
<div class="a" style="left:800px;top:872px;width:102px;height:19px;border:1px solid #a8a8a8;border-bottom-color:#8e8e8e;border-top-color:#b4b4b4;background:linear-gradient(#f5f5f5,#f0f0f0 45%,#e0e0e0);"></div>
<div class="a" style="left:906px;top:872px;width:102px;height:19px;border:1px solid #a8a8a8;border-bottom-color:#8e8e8e;border-top-color:#b4b4b4;background:linear-gradient(#f5f5f5,#f0f0f0 45%,#e0e0e0);"></div>
<div class="t" id="t0" style="top:0px;font-size:11px;color:#fff;letter-spacing:-0.063px;left:5.00px;">COGI - Formation V2, Formation (999999)</div>
<div class="t" id="t1" style="top:1px;font-size:11px;color:#fff;letter-spacing:0.280px;left:486.50px;">( 1 / 50 )</div>
<div class="t" id="t2" style="top:-1px;font-size:10px;color:#101030;left:722.00px;">0</div>
<div class="t" id="t3" style="top:-1px;font-size:10px;color:#101030;left:765.60px;">0</div>
<div class="t" id="t4" style="top:-1px;font-size:10px;color:#101030;left:809.70px;">0</div>
<div class="t" id="t5" style="top:0px;font-size:11px;color:#fff;letter-spacing:0.008px;left:836.00px;">2019-03-11</div>
<div class="t" id="t6" style="top:20px;font-size:11px;color:#fff;font-weight:bold;letter-spacing:-0.275px;left:28.70px;">Retour</div>
<div class="t" id="t7" style="top:20px;font-size:11px;color:#fff;font-weight:bold;letter-spacing:-0.269px;left:98.70px;">Accueil</div>
<div class="t" id="t8" style="top:20px;font-size:11px;color:#fff;font-weight:bold;letter-spacing:-0.264px;left:169.70px;">Action</div>
<div class="t" id="t9" style="top:20px;font-size:11px;color:#fff;font-weight:bold;letter-spacing:-0.080px;left:233.90px;">Fonction</div>
<div class="t" id="t10" style="top:20px;font-size:11px;color:#fff;font-weight:bold;letter-spacing:-0.004px;left:313.70px;">Impression</div>
<div class="t" id="t11" style="top:20px;font-size:11px;color:#fff;font-weight:bold;letter-spacing:-0.294px;left:409.30px;">Documents</div>
<div class="t" id="t12" style="top:19px;font-size:14px;color:#fff;font-family:'Liberation Sans','DejaVu Sans',sans-serif;font-weight:bold;left:491.40px;">?</div>
<div class="t" id="t13" style="top:38px;font-size:9.4px;color:#111;letter-spacing:-0.019px;left:17.00px;">Accueil &gt; Financier &gt; Comptes clients &gt;</div>
<div class="t" id="t14" style="top:38px;font-size:9.4px;color:#111;font-weight:bold;letter-spacing:-0.118px;left:208.00px;">Compte client</div>
<div class="t" id="t15" style="top:59px;font-size:11px;color:#10107a;font-weight:bold;letter-spacing:-0.121px;left:25.00px;">Client</div>
<div class="t" id="t16" style="top:59px;font-size:11px;color:#000;letter-spacing:-0.232px;left:79.00px;">2011-0000004</div>
<div class="t" id="t17" style="top:58px;font-size:11px;color:#111;letter-spacing:0.091px;left:196.00px;">Vallières, Huguette (F)</div>
<div class="t" id="t18" style="top:60px;font-size:7.5px;color:#0866c4;left:382.80px;text-shadow:0 0 0.4px #0866c4;">D</div>
<div class="t" id="t19" style="top:82px;font-size:11px;color:#111;letter-spacing:0.147px;left:8.00px;">Logement :</div>
<div class="t" id="t20" style="top:82px;font-size:11px;color:#111;letter-spacing:0.223px;left:76.40px;">00065P.001 / A / 1cc /</div>
<div class="t" id="t21" style="top:82px;font-size:11px;color:#111;font-style:italic;letter-spacing:-0.550px;left:205.60px;">HLM</div>
<div class="t" id="t22" style="top:108px;font-size:11px;color:#111;letter-spacing:0.114px;left:20.00px;">Adresse :</div>
<div class="t" id="t23" style="top:102px;font-size:11px;color:#111;letter-spacing:0.061px;left:76.40px;">65, rue Des Peupliers Ouest, app. 1</div>
<div class="t" id="t24" style="top:114px;font-size:11px;color:#111;letter-spacing:-0.017px;left:76.40px;">Québec (Québec) G1L 1H3</div>
<div class="t" id="t25" style="top:135px;font-size:11px;color:#111;letter-spacing:0.084px;left:7.80px;">Téléphone :</div>
<div class="t" id="t26" style="top:135px;font-size:11px;color:#111;letter-spacing:0.140px;left:75.40px;">Dom. 418 404-0674</div>
<div class="t" id="t27" style="top:108px;font-size:11px;color:#111;letter-spacing:-0.109px;left:359.50px;">Statut ménage</div>
<div class="t" id="t28" style="top:108px;font-size:11px;color:#7b7b7b;letter-spacing:-0.181px;left:449.60px;">Locataire</div>
<div class="t" id="t29" style="top:135px;font-size:11px;color:#111;letter-spacing:0.098px;left:367.00px;">Étape perc. *</div>
<div class="t" id="t30" style="top:135px;font-size:11px;color:#6d6d6d;letter-spacing:-0.299px;left:447.80px;">00</div>
<div class="t" id="t31" style="top:135px;font-size:11px;color:#111;letter-spacing:0.372px;left:516.00px;">LOCATAIRE</div>
<div class="t" id="t32" style="top:82px;font-size:11px;color:#111;letter-spacing:-0.117px;left:585.00px;">Solde courant</div>
<div class="t" id="t33" style="top:82px;font-size:11px;color:#6d6d6d;letter-spacing:-0.498px;left:719.70px;">0.00</div>
<div class="t" id="t34" style="top:82px;font-size:11px;color:#111;left:749.70px;">$</div>
<div class="t" id="t35" style="top:108px;font-size:11px;color:#111;letter-spacing:-0.054px;left:600.00px;">Solde futur</div>
<div class="t" id="t36" style="top:108px;font-size:11px;color:#6d6d6d;letter-spacing:-0.498px;left:719.70px;">0.00</div>
<div class="t" id="t37" style="top:108px;font-size:11px;color:#111;left:749.70px;">$</div>
<div class="t" id="t38" style="top:59px;font-size:11px;color:#111;letter-spacing:-0.141px;left:792.70px;">Succursale</div>
<div class="t" id="t39" style="top:59px;font-size:11px;color:#7b7b7b;letter-spacing:-0.131px;left:860.00px;">Formation</div>
<div class="t" id="t40" style="top:82px;font-size:11px;color:#111;letter-spacing:-0.020px;left:777.40px;">Statut du bail</div>
<div class="t" id="t41" style="top:82px;font-size:11px;color:#7b7b7b;letter-spacing:-0.084px;left:860.00px;">Prolongé</div>
<div class="t" id="t42" style="top:108px;font-size:11px;color:#111;letter-spacing:-0.148px;left:831.60px;">Bail</div>
<div class="t" id="t43" style="top:108px;font-size:11px;color:#555;letter-spacing:-0.050px;left:857.40px;">B2011-00001</div>
<div class="t" id="t44" style="top:108px;font-size:11px;color:#555;letter-spacing:0.201px;left:971.60px;">13</div>
<div class="t" id="t45" style="top:135px;font-size:11px;color:#111;letter-spacing:0.119px;left:806.50px;">Part loc.</div>
<div class="t" id="t46" style="top:135px;font-size:11px;color:#555;letter-spacing:-0.338px;left:897.00px;">677.00</div>
<div class="t" id="t47" style="top:135px;font-size:11px;color:#111;left:940.50px;">$</div>
<div class="t" id="t48" style="top:166px;font-size:11px;color:#fff;font-weight:bold;letter-spacing:-0.288px;left:4.30px;">Général</div>
<div class="t" id="t49" style="top:166px;font-size:11px;color:#fff;font-weight:bold;letter-spacing:-0.138px;left:59.60px;">Historique</div>
<div class="t" id="t50" style="top:166px;font-size:11px;color:#fff;font-weight:bold;letter-spacing:-0.231px;left:132.30px;">Portrait</div>
<div class="t" id="t51" style="top:166px;font-size:11px;color:#fff;font-weight:bold;letter-spacing:-0.185px;left:189.80px;">Transaction</div>
<div class="t" id="t52" style="top:166px;font-size:11px;color:#fff;font-weight:bold;letter-spacing:-0.268px;left:269.00px;">Recouvrement</div>
<div class="t" id="t53" style="top:166px;font-size:11px;color:#000;font-weight:bold;letter-spacing:-0.210px;left:365.30px;">PPA auto</div>
<div class="t" id="t54" style="top:166px;font-size:11px;color:#fff;font-weight:bold;letter-spacing:-0.335px;left:431.00px;">Arrêt de paiement</div>
<div class="t" id="t55" style="top:166px;font-size:11px;color:#fff;font-weight:bold;letter-spacing:-0.329px;left:549.00px;">Banque</div>
<div class="t" id="t56" style="top:166px;font-size:11px;color:#fff;font-weight:bold;letter-spacing:-0.121px;left:603.60px;">Effet</div>
<div class="t" id="t57" style="top:166px;font-size:11px;color:#fff;font-weight:bold;letter-spacing:0.044px;left:641.80px;">Information</div>
<div class="t" id="t58" style="top:166px;font-size:11px;color:#fff;font-weight:bold;letter-spacing:-0.315px;left:724.70px;">Encaissement</div>
<div class="t" id="t59" style="top:166px;font-size:11px;color:#fff;font-weight:bold;letter-spacing:-0.355px;left:817.80px;">Assurance</div>
<div class="t" id="t60" style="top:166px;font-size:11px;color:#fff;font-weight:bold;letter-spacing:-0.018px;left:888.40px;">Intervenant</div>
<div class="t" id="t61" style="top:166px;font-size:11px;color:#fff;font-weight:bold;letter-spacing:-0.324px;left:971.60px;">Suivi</div>
<div class="t" id="t62" style="top:186px;font-size:11px;color:#fff;font-weight:bold;letter-spacing:-0.370px;left:3.50px;">Notes</div>
<div class="t" id="t63" style="top:186px;font-size:11px;color:#fff;font-weight:bold;letter-spacing:-0.096px;left:47.70px;">Fichier joint</div>
<div class="t" id="t64" style="top:220px;font-size:11px;color:#111;letter-spacing:0.098px;left:5.30px;">Encaissement des PPA effectué jusqu&#x27;au : 2018-11-28</div>
<div class="t" id="t65" style="top:237px;font-size:11px;color:#111;letter-spacing:0.085px;left:5.30px;">Dernier PPA auto encaissé pour le client : 677.00$</div>
<div class="t" id="t66" style="top:237px;font-size:11px;color:#111;letter-spacing:0.405px;left:310.30px;">Le : 2018-11-01</div>
<div class="t" id="t67" style="top:269px;font-size:11px;color:#000;font-weight:bold;letter-spacing:-0.246px;left:4.30px;">Sommaire</div>
<div class="t" id="t68" style="top:292px;font-size:11px;color:#10107a;font-weight:bold;letter-spacing:0.569px;left:31.00px;">Du</div>
<div class="t" id="t69" style="top:292px;font-size:11px;color:#10107a;font-weight:bold;letter-spacing:0.187px;left:125.00px;">Au</div>
<div class="t" id="t70" style="top:292px;font-size:11px;color:#10107a;font-weight:bold;letter-spacing:-0.018px;left:184.40px;">Reporté au</div>
<div class="t" id="t71" style="top:292px;font-size:11px;color:#10107a;font-weight:bold;letter-spacing:-0.093px;left:361.30px;">Occupant</div>
<div class="t" id="t72" style="top:292px;font-size:11px;color:#10107a;font-weight:bold;letter-spacing:-0.026px;left:529.00px;">Mode</div>
<div class="t" id="t73" style="top:292px;font-size:11px;color:#10107a;font-weight:bold;letter-spacing:-0.022px;left:586.00px;">Montant max</div>
<div class="t" id="t74" style="top:292px;font-size:11px;color:#10107a;font-weight:bold;letter-spacing:-0.283px;left:811.00px;">Motif</div>
<div class="t" id="t75" style="top:312px;font-size:11px;color:#10107a;font-weight:bold;letter-spacing:0.199px;left:7.50px;">2010-12-01</div>
<div class="t" id="t76" style="top:312px;font-size:11px;color:#111;letter-spacing:0.208px;left:93.50px;">9999-12-31</div>
<div class="t" id="t77" style="top:312px;font-size:11px;color:#111;letter-spacing:0.005px;left:265.00px;">Vallières, Huguette</div>
<div class="t" id="t78" style="top:312px;font-size:11px;color:#111;letter-spacing:0.019px;left:520.40px;">PPA</div>
<div class="t" id="t79" style="top:461px;font-size:11px;color:#000;font-weight:bold;letter-spacing:-0.069px;left:3.30px;">Détail</div>
<div class="t" id="t80" style="top:488px;font-size:11px;color:#111;letter-spacing:-0.346px;left:16.80px;">Occupant</div>
<div class="t" id="t81" style="top:488px;font-size:11px;color:#000;font-family:'Liberation Sans','DejaVu Sans',sans-serif;letter-spacing:-0.034px;left:75.40px;">Vallières, Huguette</div>
<div class="t" id="t82" style="top:514px;font-size:11px;color:#111;letter-spacing:0.530px;left:52.30px;">Du</div>
<div class="t" id="t83" style="top:515px;font-size:11px;color:#6d6d6d;letter-spacing:-0.014px;left:74.60px;">2010-12-01</div>
<div class="t" id="t84" style="top:514px;font-size:11px;color:#111;letter-spacing:0.336px;left:204.00px;">Au *</div>
<div class="t" id="t85" style="top:515px;font-size:11px;color:#000;letter-spacing:-0.103px;left:241.00px;">9999-12-31</div>
<div class="t" id="t86" style="top:514px;font-size:11px;color:#111;letter-spacing:-0.247px;left:429.60px;">Motif</div>
<div class="t" id="t87" style="top:514px;font-size:11px;color:#111;letter-spacing:0.217px;left:804.20px;">Date saisie : 2011-03-30</div>
<div class="t" id="t88" style="top:539px;font-size:11px;color:#111;left:112.60px;">Montant maximum</div>
<div class="t" id="t89" style="top:539px;font-size:11px;color:#111;letter-spacing:0.039px;left:429.60px;">Encaisser le montant maximum jusqu&#x27;au</div>
<div class="t" id="t90" style="top:564px;font-size:11px;color:#111;letter-spacing:0.016px;left:28.40px;">Prochain encaissement reporté au</div>
<div class="t" id="t91" style="top:600px;font-size:11px;color:#000;font-weight:bold;letter-spacing:-0.136px;left:3.30px;">Liste des baux / contrats</div>
<div class="t" id="t92" style="top:616px;font-size:11px;color:#10107a;font-weight:bold;letter-spacing:0.254px;left:24.90px;">Bail / Contrat</div>
<div class="t" id="t93" style="top:616px;font-size:11px;color:#10107a;font-weight:bold;letter-spacing:-0.099px;left:166.60px;">Début</div>
<div class="t" id="t94" style="top:616px;font-size:11px;color:#10107a;font-weight:bold;letter-spacing:-0.342px;left:257.30px;">Fin</div>
<div class="t" id="t95" style="top:616px;font-size:11px;color:#10107a;font-weight:bold;letter-spacing:0.114px;left:374.90px;">Programme</div>
<div class="t" id="t96" style="top:616px;font-size:11px;color:#10107a;font-weight:bold;letter-spacing:0.127px;left:560.30px;">Type de bail / contrat</div>
<div class="t" id="t97" style="top:616px;font-size:11px;color:#10107a;font-weight:bold;letter-spacing:-0.259px;left:792.30px;">Statut</div>
<div class="t" id="t98" style="top:616px;font-size:11px;color:#10107a;font-weight:bold;letter-spacing:0.100px;left:894.30px;">Charge ($)</div>
<div class="t" id="t99" style="top:635px;font-size:11px;color:#10107a;font-weight:bold;letter-spacing:0.288px;left:6.50px;">B2011-00001-13</div>
<div class="t" id="t100" style="top:635px;font-size:11px;color:#111;letter-spacing:0.175px;left:148.50px;">2017-12-01</div>
<div class="t" id="t101" style="top:635px;font-size:11px;color:#111;letter-spacing:0.075px;left:229.60px;">2018-11-30</div>
<div class="t" id="t102" style="top:635px;font-size:11px;color:#111;font-style:italic;letter-spacing:-0.550px;left:310.60px;">HLM</div>
<div class="t" id="t103" style="top:635px;font-size:11px;color:#111;letter-spacing:-0.079px;left:518.30px;">Reconduction</div>
<div class="t" id="t104" style="top:635px;font-size:11px;color:#111;letter-spacing:0.087px;left:740.20px;">Prolongé</div>
<div class="t" id="t105" style="top:635px;font-size:11px;color:#111;left:929.40px;">677.00</div>
<div class="t" id="t106" style="top:654px;font-size:11px;color:#10107a;font-weight:bold;letter-spacing:0.288px;left:6.50px;">B2011-00001-12</div>
<div class="t" id="t107" style="top:654px;font-size:11px;color:#111;letter-spacing:0.175px;left:148.50px;">2016-12-01</div>
<div class="t" id="t108" style="top:654px;font-size:11px;color:#111;letter-spacing:0.075px;left:229.60px;">2017-11-30</div>
<div class="t" id="t109" style="top:654px;font-size:11px;color:#111;font-style:italic;letter-spacing:-0.550px;left:310.60px;">HLM</div>
<div class="t" id="t110" style="top:654px;font-size:11px;color:#111;letter-spacing:-0.079px;left:518.30px;">Reconduction</div>
<div class="t" id="t111" style="top:654px;font-size:11px;color:#111;letter-spacing:-0.060px;left:740.20px;">Reconduit</div>
<div class="t" id="t112" style="top:654px;font-size:11px;color:#111;left:929.40px;">651.00</div>
<div class="t" id="t113" style="top:673px;font-size:11px;color:#10107a;font-weight:bold;letter-spacing:0.288px;left:6.50px;">B2011-00001-11</div>
<div class="t" id="t114" style="top:673px;font-size:11px;color:#111;letter-spacing:0.175px;left:148.50px;">2016-02-01</div>
<div class="t" id="t115" style="top:673px;font-size:11px;color:#111;letter-spacing:0.075px;left:229.60px;">2016-11-30</div>
<div class="t" id="t116" style="top:673px;font-size:11px;color:#111;font-style:italic;letter-spacing:-0.550px;left:310.60px;">HLM</div>
<div class="t" id="t117" style="top:673px;font-size:11px;color:#111;letter-spacing:-0.039px;left:519.30px;">Amend. modification de services</div>
<div class="t" id="t118" style="top:673px;font-size:11px;color:#111;letter-spacing:-0.060px;left:740.20px;">Reconduit</div>
<div class="t" id="t119" style="top:673px;font-size:11px;color:#111;left:929.40px;">641.00</div>
<div class="t" id="t120" style="top:692px;font-size:11px;color:#10107a;font-weight:bold;letter-spacing:0.211px;left:6.50px;">B2011-00001-10</div>
<div class="t" id="t121" style="top:692px;font-size:11px;color:#111;letter-spacing:0.175px;left:148.50px;">2015-12-01</div>
<div class="t" id="t122" style="top:692px;font-size:11px;color:#111;letter-spacing:0.075px;left:229.60px;">2016-11-30</div>
<div class="t" id="t123" style="top:692px;font-size:11px;color:#111;font-style:italic;letter-spacing:-0.550px;left:310.60px;">HLM</div>
<div class="t" id="t124" style="top:692px;font-size:11px;color:#111;letter-spacing:-0.079px;left:518.30px;">Reconduction</div>
<div class="t" id="t125" style="top:692px;font-size:11px;color:#111;letter-spacing:-0.312px;left:741.20px;">Amendé</div>
<div class="t" id="t126" style="top:692px;font-size:11px;color:#111;left:929.40px;">629.00</div>
<div class="t" id="t127" style="top:711px;font-size:11px;color:#10107a;font-weight:bold;letter-spacing:0.325px;left:6.50px;">B2011-00001-9</div>
<div class="t" id="t128" style="top:711px;font-size:11px;color:#111;letter-spacing:0.175px;left:148.50px;">2014-12-01</div>
<div class="t" id="t129" style="top:711px;font-size:11px;color:#111;letter-spacing:0.075px;left:229.60px;">2015-11-30</div>
<div class="t" id="t130" style="top:711px;font-size:11px;color:#111;font-style:italic;letter-spacing:-0.550px;left:310.60px;">HLM</div>
<div class="t" id="t131" style="top:711px;font-size:11px;color:#111;letter-spacing:-0.079px;left:518.30px;">Reconduction</div>
<div class="t" id="t132" style="top:711px;font-size:11px;color:#111;letter-spacing:-0.060px;left:740.20px;">Reconduit</div>
<div class="t" id="t133" style="top:711px;font-size:11px;color:#111;left:929.40px;">619.00</div>
<div class="t" id="t134" style="top:730px;font-size:11px;color:#10107a;font-weight:bold;letter-spacing:0.325px;left:6.50px;">B2011-00001-8</div>
<div class="t" id="t135" style="top:730px;font-size:11px;color:#111;letter-spacing:0.175px;left:148.50px;">2013-12-01</div>
<div class="t" id="t136" style="top:730px;font-size:11px;color:#111;letter-spacing:0.075px;left:229.60px;">2014-11-30</div>
<div class="t" id="t137" style="top:730px;font-size:11px;color:#111;font-style:italic;letter-spacing:-0.550px;left:310.60px;">HLM</div>
<div class="t" id="t138" style="top:730px;font-size:11px;color:#111;letter-spacing:-0.079px;left:518.30px;">Reconduction</div>
<div class="t" id="t139" style="top:730px;font-size:11px;color:#111;letter-spacing:-0.060px;left:740.20px;">Reconduit</div>
<div class="t" id="t140" style="top:730px;font-size:11px;color:#111;left:929.40px;">601.00</div>
<div class="t" id="t141" style="top:749px;font-size:11px;color:#10107a;font-weight:bold;letter-spacing:0.325px;left:6.50px;">B2011-00001-7</div>
<div class="t" id="t142" style="top:749px;font-size:11px;color:#111;letter-spacing:0.175px;left:148.50px;">2012-12-01</div>
<div class="t" id="t143" style="top:749px;font-size:11px;color:#111;letter-spacing:0.075px;left:229.60px;">2013-11-30</div>
<div class="t" id="t144" style="top:749px;font-size:11px;color:#111;font-style:italic;letter-spacing:-0.550px;left:310.60px;">HLM</div>
<div class="t" id="t145" style="top:749px;font-size:11px;color:#111;letter-spacing:-0.079px;left:518.30px;">Reconduction</div>
<div class="t" id="t146" style="top:749px;font-size:11px;color:#111;letter-spacing:-0.060px;left:740.20px;">Reconduit</div>
<div class="t" id="t147" style="top:749px;font-size:11px;color:#111;left:929.40px;">579.00</div>
<div class="t" id="t148" style="top:874px;font-size:10.5px;color:#000;letter-spacing:0.226px;left:615.80px;">Nouveau</div>
<div class="t" id="t149" style="top:874px;font-size:10.5px;color:#000;letter-spacing:-0.022px;left:717.80px;">Supprimer</div>
<div class="t" id="t150" style="top:874px;font-size:10.5px;color:#000;letter-spacing:0.155px;left:821.20px;">Enregistrer</div>
<div class="t" id="t151" style="top:874px;font-size:10.5px;color:#000;letter-spacing:0.046px;left:936.80px;">Annuler</div>
</body></html>
